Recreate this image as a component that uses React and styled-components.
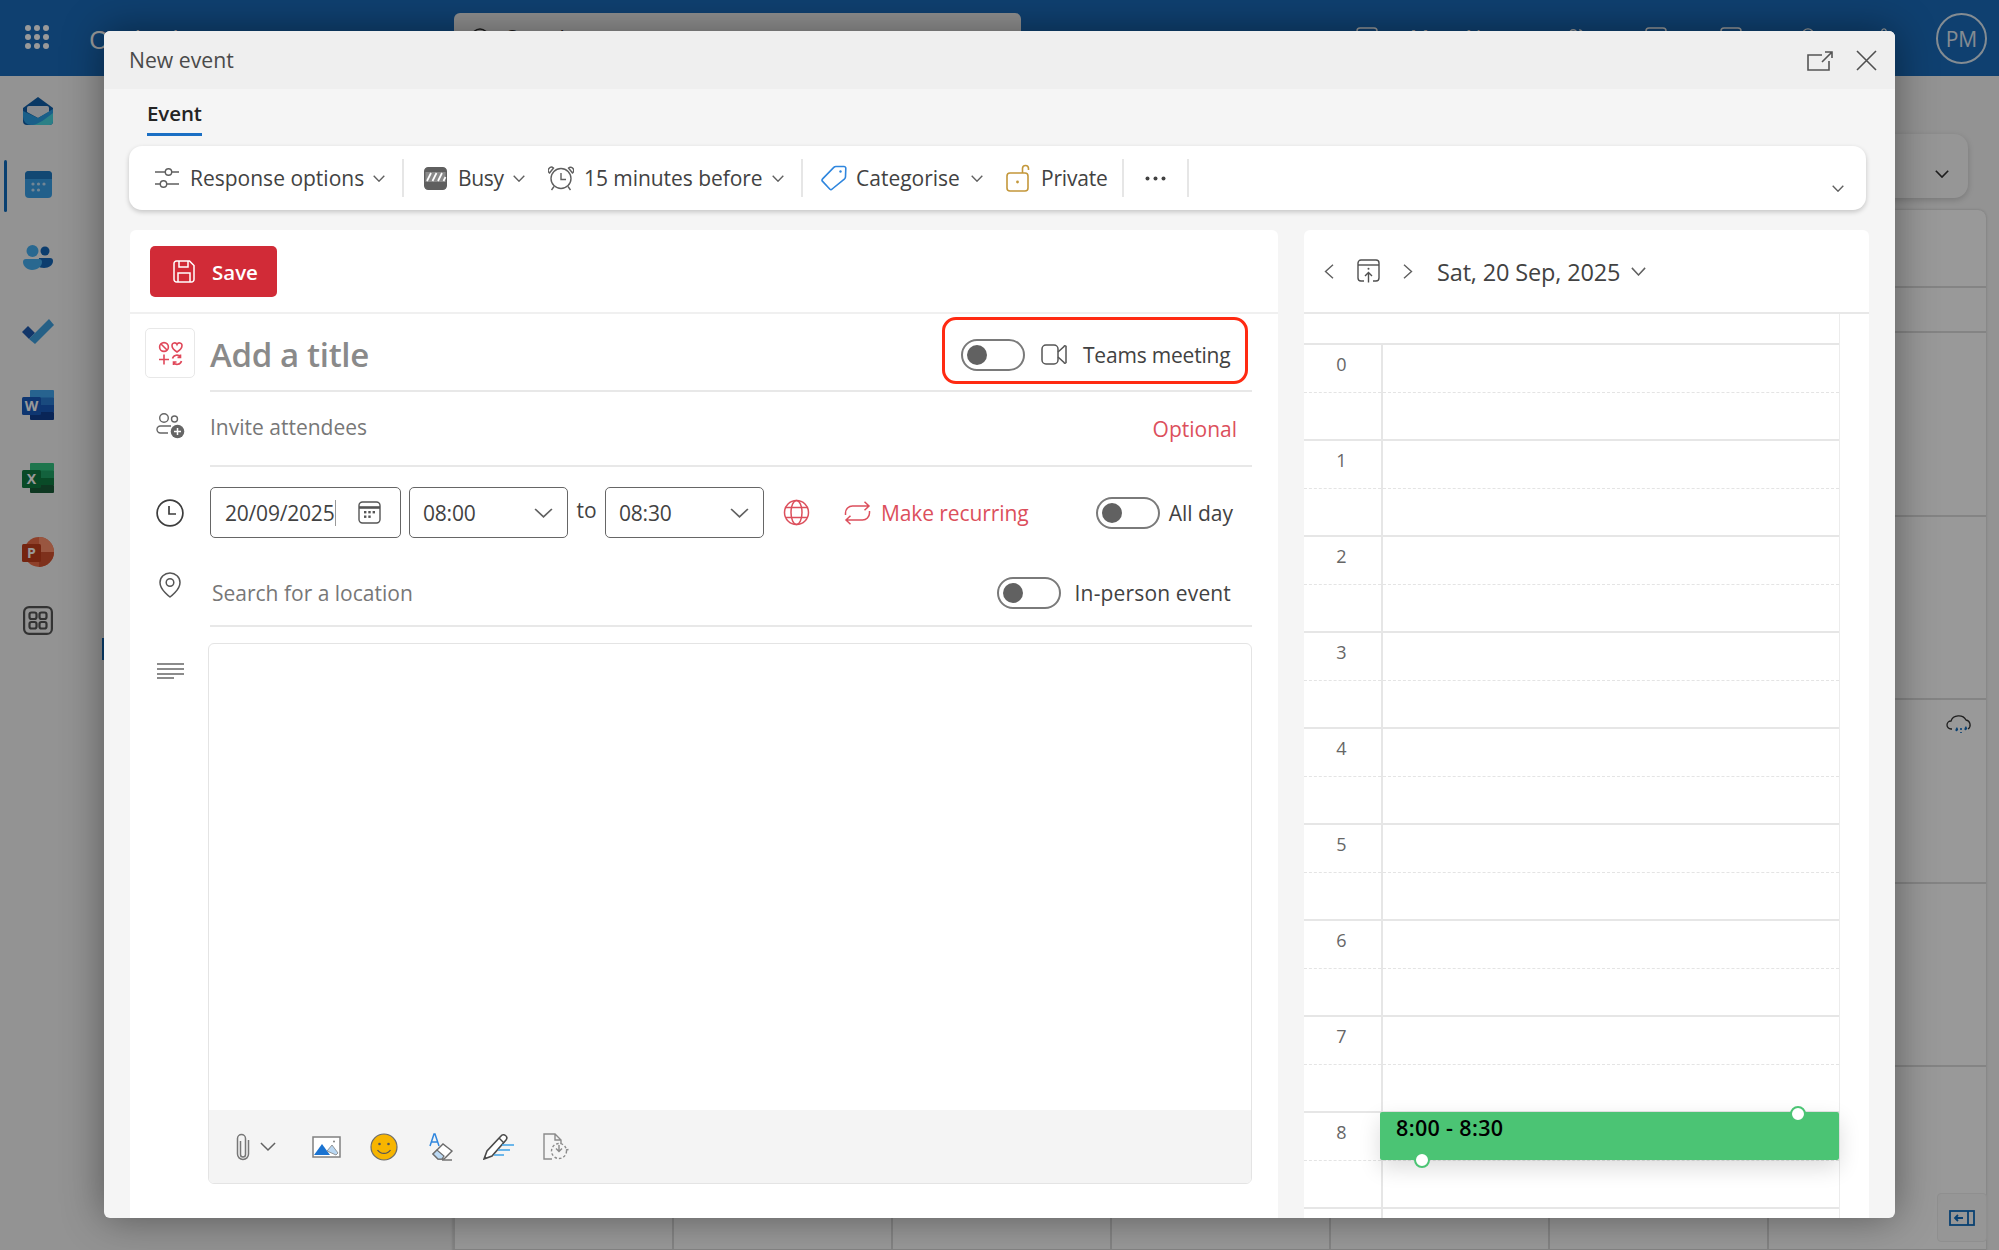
import React from "react";
import styled, { createGlobalStyle } from "styled-components";
import { Settings, Lightbulb, Users } from "lucide-react";

const Global = createGlobalStyle`
  html, body { margin: 0; padding: 0; width: 1999px; height: 1250px; overflow: hidden; background: #f5f5f5; }
  * { box-sizing: border-box; }
  body { font-family: "Open Sans", "Noto Sans", sans-serif; color: #424242; }
`;

const Page = styled.div`
  position: relative; width: 1999px; height: 1250px; overflow: hidden; background: #f5f5f5;
  display: flex; flex-direction: column;
`;
const Scrim = styled.div`position: absolute; inset: 0; background: rgba(0,0,0,.4); z-index: 1;`;

/* ---------- app behind the dialog ---------- */
const TopBar = styled.header`
  height: 76px; flex: none; background: #196cbb; display: flex; align-items: center; padding-left: 25px; color: #fff;
`;
const Waffle = styled.div`display: grid; grid-template-columns: repeat(3, 6px); gap: 3px; width: 24px; margin-top: -3px;
  i { width: 6px; height: 6px; border-radius: 50%; background: #fff; display: block; }`;
const Brand = styled.div`font-size: 26px; width: 365px; margin-left: 40px; margin-top: 2px;`;
const SearchBox = styled.div`
  width: 567px; height: 50px; background: #f0f0f0; border-radius: 6px; display: flex; align-items: center; gap: 15px; padding-left: 17px; color: #333; font-size: 21px;
`;
const TopTools = styled.div`display: flex; align-items: center; margin-left: 335px; width: 560px; font-size: 21px;`;
const TopTool = styled.span`display: flex; margin-left: ${p => p.$ml}px;`;
const MeetNow = styled.span`margin-left: 32px; width: 130px; white-space: nowrap;`;
const Avatar = styled.div`
  width: 51px; height: 51px; border-radius: 50%; border: 2px solid #fff; display: flex; align-items: center; justify-content: center; font-size: 21px; opacity: .85;
  position: absolute; right: 12px; top: 13px;
`;
const Main = styled.div`flex: 1; display: flex; min-height: 0;`;
const Sidebar = styled.nav`position: relative; width: 104px; flex: none; margin-top: -2px;`;
const NavItem = styled.div`height: ${p => p.$h || 73.5}px; display: flex; align-items: center; justify-content: center; padding-right: 28px;`;
const NavMark = styled.span`position: absolute; left: 4px; top: 86px; width: 3px; height: 52px; border-radius: 2px; background: #0f6cbd;`;
const NavTick = styled.span`position: absolute; right: 0; top: 564px; width: 2px; height: 22px; background: #0f6cbd;`;
const Canvas = styled.div`flex: 1; position: relative; padding: 0 13px 0 349px;`;
const FilterCard = styled.div`
  height: 64px; margin: 58px 18px 12px 0; background: #fafafa; border-radius: 14px; box-shadow: 0 2px 6px rgba(0,0,0,.18);
  display: flex; justify-content: flex-end; align-items: center; padding: 16px 19px 0 0;
`;
const WeekPanel = styled.div`background: #fff; border-radius: 8px 8px 0 0; box-shadow: 0 0 3px rgba(0,0,0,.2); height: 1100px;`;
const WeekHead = styled.div`height: 78px; border-bottom: 2px solid #ddd;`;
const WeekSub = styled.div`height: 45px; border-bottom: 2px solid #ddd;`;
const WeekGrid = styled.div`display: grid; grid-template-columns: repeat(7, 1fr); grid-auto-rows: 183.6px;`;
const DayCell = styled.div`border-left: 2px solid #ddd; border-bottom: 2px solid #ddd; display: flex; justify-content: flex-end; padding: 14px 13px 0 0;`;
const PaneToggle = styled.div`
  position: absolute; right: 12px; bottom: 8px; width: 50px; height: 49px; background: #fafafa; border: 1px solid #eee; border-radius: 4px;
  display: flex; align-items: center; justify-content: center;
`;

/* ---------- dialog ---------- */
const Dialog = styled.section`
  position: absolute; left: 104px; top: 31px; width: 1791px; height: 1187px; z-index: 2;
  background: #f5f5f5; border-radius: 6px; overflow: hidden;
  box-shadow: 0 0 42px rgba(0,0,0,.42); display: flex; flex-direction: column;
`;
const DialogHead = styled.div`
  height: 58px; flex: none; background: #efefef; display: flex; align-items: center; justify-content: space-between; padding: 0 18px 0 25px;
`;
const DialogTitle = styled.h1`margin: 0; font-weight: 400; font-size: 21.2px; color: #4a4a4a; margin-top: -2px;`;
const HeadActions = styled.div`display: flex; align-items: center; gap: 23px; margin-top: 1px;`;
const TabStrip = styled.div`height: 57px; flex: none; padding-left: 43px;`;
const Tab = styled.div`
  display: inline-block; height: 47px; padding-top: 9px; font-size: 20.5px; font-weight: 600; color: #242424; line-height: 30px; border-bottom: 3.5px solid #1a6fc4; letter-spacing: -.1px;
`;
const Toolbar = styled.div`
  height: 64px; flex: none; margin: 0 29px 0 25px; background: #fff; border-radius: 13px; box-shadow: 0 2px 5px rgba(0,0,0,.2);
  display: flex; align-items: center; padding-left: 25px; position: relative;
`;
const ToolGroup = styled.div`display: flex; align-items: center; margin-left: ${p => p.$ml || 0}px;`;
const ToolIcon = styled.span`display: flex; margin-right: ${p => p.$gap}px;`;
const ToolLabel = styled.span`width: ${p => p.$w}px; font-size: 21px; white-space: nowrap; color: #424242; letter-spacing: ${p => p.$ls || 0}px; margin-right: ${p => p.$mr || 0}px;`;
const ToolSep = styled.span`width: 2px; height: 38px; background: #e6e6e6; margin-left: ${p => p.$ml}px;`;
const ToolCollapse = styled.span`position: absolute; right: 22px; bottom: 18px; display: flex;`;

const Content = styled.div`flex: 1; min-height: 0; display: flex; gap: 26px; padding: 20px 26px 0 26px;`;
const FormPanel = styled.div`width: 1148px; background: #fff; border-radius: 6px 6px 0 0; display: flex; flex-direction: column; padding-right: 26px; flex: none;`;
const SaveBar = styled.div`height: 84px; flex: none; margin-right: -26px; border-bottom: 2px solid #f0f0f0; padding: 16px 0 0 20px;`;
const SaveButton = styled.button`
  width: 127px; height: 51px; border: 0; border-radius: 5px; background: #d12b37; color: #fff; display: flex; align-items: center; gap: 17px; padding: 0 0 0 23px;
  font: 600 20.5px "Open Sans", sans-serif;
`;
const Row = styled.div`height: ${p => p.$h}px; flex: none; display: flex;`;
const RowIcon = styled.div`width: 80px; flex: none; display: flex; align-items: center; justify-content: center; padding-bottom: ${p => p.$pb || 0}px;`;
const RowBody = styled.div`flex: 1; min-width: 0; display: flex; align-items: center; justify-content: space-between; ${p => p.$line && "border-bottom: 2px solid #e8e8e8;"} padding-top: ${p => p.$pt || 0}px;`;
const IconBox = styled.div`width: 50px; height: 50px; border: 1.5px solid #e8e8e8; border-radius: 5px; display: flex; align-items: center; justify-content: center; margin: 14px 15px 0 15px; flex: none;`;
const TitleRow = styled.div`height: 78px; flex: none; display: flex;`;
const TitleInput = styled.span`font-size: 33px; font-weight: 600; color: #8a8a8a; letter-spacing: -.35px; margin-top: 5px;`;
const CalloutBox = styled.div`
  width: 306px; height: 67px; border: 3px solid #ff2a12; border-radius: 14px; display: flex; align-items: center; padding: 8px 0 0 16px; margin: 0 4px 3px 0; flex: none;
`;
const Switch = styled.span`
  width: 64px; height: 32px; flex: none; border: 2px solid #7a7a7a; border-radius: 16px; display: flex; align-items: center; padding-left: 4px; background: #fff;
  &::before { content: ""; width: 20px; height: 20px; border-radius: 50%; background: #616161; }
`;
const SwitchLabel = styled.span`font-size: 21px; color: #424242; white-space: nowrap; margin-left: ${p => p.$ml}px; letter-spacing: ${p => p.$ls || 0}px;`;
const Placeholder = styled.span`font-size: 21px; color: #777; white-space: nowrap; margin-left: ${p => p.$ml || 0}px; margin-top: ${p => p.$mt || 0}px;`;
const Accent = styled.span`font-size: 21px; color: #dc4f5c; white-space: nowrap; margin: 0 ${p => p.$mr || 0}px 0 ${p => p.$ml || 0}px; letter-spacing: ${p => p.$ls || 0}px;`;
const Inline = styled.div`display: flex; align-items: center; margin-right: ${p => p.$mr || 0}px;`;
const Field = styled.div`
  width: ${p => p.$w}px; height: 51px; flex: none; border: 1.5px solid #666; border-radius: 5px; display: flex; align-items: center; justify-content: space-between; margin-left: ${p => p.$ml || 0}px; padding: 0 ${p => p.$pr}px 0 ${p => p.$pl}px; font-size: 21px; color: #424242; background: #fff;
`;
const Caret = styled.span`width: 1px; height: 26px; background: #999; margin-left: 1px;`;
const FieldText = styled.span`display: flex; align-items: center; letter-spacing: -.2px;`;
const ToWord = styled.span`font-size: 21px; width: 37px; text-align: center; margin-top: -6px; flex: none;`;
const BodyRow = styled.div`display: flex; margin-top: 16px; height: 541px; flex: none;`;
const BodyIcon = styled.div`width: 78px; flex: none; display: flex; justify-content: center; padding: 20px 0 0 3px;`;
const Editor = styled.div`flex: 1; border: 1.5px solid #e4e4e4; border-radius: 6px; overflow: hidden; display: flex; flex-direction: column; justify-content: flex-end;`;
const EditorBar = styled.div`height: 73px; background: #f4f4f4; display: flex; align-items: center; padding-left: 27px;`;
const BarIcon = styled.span`display: flex; margin-left: ${p => p.$ml}px;`;

const CalPanel = styled.div`flex: 1; min-width: 0; background: #fff; border-radius: 6px 6px 0 0; overflow: hidden; display: flex; flex-direction: column;`;
const CalHead = styled.div`height: 84px; flex: none; border-bottom: 2px solid #e8e8e8; display: flex; align-items: center; padding-left: 20px;`;
const CalBtn = styled.span`display: flex; margin-right: ${p => p.$mr}px;`;
const CalDate = styled.span`font-size: 23.5px; font-weight: 500; color: #424242; margin: 2px 11px 0 0; white-space: nowrap; letter-spacing: -.15px;`;
const CalGrid = styled.div`width: 536px; flex: 1; border-right: 1.5px solid #ececec;`;
const AllDayStrip = styled.div`height: 29px;`;
const Hour = styled.div`height: 96px; display: flex; border-top: 2px solid #e6e6e6; position: relative;`;
const HourLabel = styled.div`width: 77px; flex: none; position: relative; text-align: center; font-size: 18px; line-height: 24px; padding-top: 7px; color: #666; padding-right: 2px;
  &::after { content: ""; position: absolute; left: 0; right: 0; top: 47px; border-top: 1.5px dashed #e4e4e4; }`;
const HourBody = styled.div`flex: 1; border-left: 2px solid #e6e6e6; position: relative;
  &::after { content: ""; position: absolute; left: 0; right: 0; top: 47px; border-top: 1.5px dashed #e4e4e4; }`;
const EventBlock = styled.div`
  position: absolute; left: -3px; right: 0; top: -1px; height: 48px; background: #4bc474; border-radius: 2px; z-index: 1;
  box-shadow: 0 8px 22px rgba(0,0,0,.14); padding: 1px 0 0 16px; font-size: 21.5px; line-height: 30px; font-weight: 600; color: #000; letter-spacing: .35px;
`;
const Handle = styled.span`
  position: absolute; width: 16px; height: 16px; border-radius: 50%; background: #fff; border: 2.5px solid #4bc474;
  ${p => p.$top ? "right: 33px; top: -6px;" : "left: 34px; bottom: -8px;"}
`;

const Chev = ({ w = 12, h = 7, c = "#616161", sw = 1.4 }) => (
  <svg width={w} height={h} viewBox="0 0 12 7" preserveAspectRatio="none" fill="none"><path d="M.7.7 6 6.2 11.3.7" stroke={c} strokeWidth={sw} /></svg>
);

const Grey = "#5f5f5f";
const SlidersIc = () => (
  <svg width="26" height="22" viewBox="0 0 26 22" fill="none" stroke={Grey} strokeWidth="1.4"><path d="M1 5h10M18 5h7M1 17h5M13 17h12" /><circle cx="14.5" cy="5" r="3.2" /><circle cx="9.5" cy="17" r="3.2" /></svg>
);
const BusyIc = () => (
  <svg width="23" height="23" viewBox="0 0 23 23">
    <rect x=".7" y=".7" width="21.6" height="21.6" rx="3.5" fill="#8a8a8a" stroke="#5f5f5f" strokeWidth="1.4" />
    <path d="M1 5V4a3 3 0 0 1 3-3h15a3 3 0 0 1 3 3v1z" fill="#5f5f5f" />
    <path d="M1 15h21v4a3 3 0 0 1-3 3H4a3 3 0 0 1-3-3z" fill="#5f5f5f" />
    <path d="M3 14l4-8M8.5 14l4-8M14 14l4-8M19.5 14l2-4" stroke="#fff" strokeWidth="1.7" />
  </svg>
);
const AlarmIc = () => (
  <svg width="26" height="25" viewBox="0 0 26 25" fill="none" stroke={Grey} strokeWidth="1.4"><circle cx="13" cy="12.5" r="10" /><path d="M13 7v6.5h5M1.5 7 5.5 2a3 3 0 0 0-4 5zM24.5 7 20.5 2a3 3 0 0 1 4 5zM6 20.5l-2.500 3.500M20 20.500l2.500 3.500" /></svg>
);
const TagIc = () => (
  <svg width="26" height="26" viewBox="0 0 26 26" fill="none" stroke="#2f86de" strokeWidth="1.6"><path d="M15 1.5h8a1.8 1.8 0 0 1 1.8 1.8l-.3 8.5a3 3 0 0 1-.9 2L11.2 24a1.8 1.8 0 0 1-2.5 0L1.6 16.4a1.8 1.8 0 0 1 0-2.5L12.8 2.4a3 3 0 0 1 2.2-.9z" /><circle cx="19.5" cy="6.5" r="1.2" fill="#2f86de" stroke="none" /></svg>
);
const LockIc = () => (
  <svg width="24" height="28" viewBox="0 0 24 28" fill="none" stroke="#c3973a" strokeWidth="1.6"><rect x="1" y="9" width="21" height="18" rx="3" /><path d="M16.5 9V4.5a3 3 0 0 1 6 0V6" /><circle cx="11.5" cy="18" r="1.4" fill="#c3973a" stroke="none" /></svg>
);
const Dots = () => (
  <svg width="21" height="5" viewBox="0 0 21 5" fill="#424242"><circle cx="2.5" cy="2.5" r="2" /><circle cx="10.5" cy="2.5" r="2" /><circle cx="18.5" cy="2.5" r="2" /></svg>
);
const PopOut = () => (
  <svg width="26" height="20" viewBox="0 0 26 20" fill="none" stroke="#555" strokeWidth="1.6"><path d="M15 4H1v15h21V10" /><path d="M15 11 25 1M18 1h7v6" /></svg>
);
const CloseX = () => (
  <svg width="21" height="21" viewBox="0 0 21 21" fill="none" stroke="#505050" strokeWidth="1.6"><path d="m1 1 19 19M20 1 1 20" /></svg>
);
const SaveIc = () => (
  <svg width="22" height="23" viewBox="0 0 22 23" fill="none" stroke="#fff" strokeWidth="1.5"><path d="M1 3.5A2.5 2.5 0 0 1 3.5 1h13L21 5.5v14a2.5 2.5 0 0 1-2.5 2.5h-15A2.5 2.5 0 0 1 1 19.5z" /><path d="M6 1v6h9V1M5 22v-9h12v9" /></svg>
);
const CategoryIc = () => (
  <svg width="25" height="25" viewBox="0 0 25 25" fill="none" stroke="#e0485a" strokeWidth="1.6"><circle cx="6" cy="6" r="4.4" /><path d="m3 3 6 6" /><path d="M19 11s-5-3-5-6.4A2.6 2.6 0 0 1 19 3.5a2.6 2.6 0 0 1 5 1.1C24 8 19 11 19 11z" /><path d="M1 18.5h10M6 13.5v10" /><path d="M14.5 17.5a4.5 4.5 0 0 1 8-1.5M23.5 20a4.5 4.5 0 0 1-8 1.5M22.5 13.5V16.5H19.5M15.5 24v-3h3" /></svg>
);
const VideoIc = () => (
  <svg width="26" height="21" viewBox="0 0 26 21" fill="none" stroke="#555" strokeWidth="1.5"><rect x="1" y="1" width="16" height="19" rx="4" /><path d="M17 8l6-5.5a1 1 0 0 1 2 .8v14.4a1 1 0 0 1-2 .8L17 13" /></svg>
);
const AttendeeIc = () => (
  <svg width="29" height="26" viewBox="0 0 29 26" fill="none" stroke="#666" strokeWidth="1.4"><circle cx="8" cy="5" r="4.3" /><circle cx="18.5" cy="6" r="3" /><path d="M15 13H4.5a3.4 3.4 0 0 0 0 7H12" /><circle cx="21.5" cy="18.5" r="6.8" fill="#666" stroke="none" /><path d="M21.5 15v7M18 18.5h7" stroke="#fff" strokeWidth="1.5" /></svg>
);
const ClockIc = () => (
  <svg width="28" height="28" viewBox="0 0 28 28" fill="none" stroke="#3d3d3d" strokeWidth="1.7"><circle cx="14" cy="14" r="12.9" /><path d="M13 7v8h7" /></svg>
);
const CalSmall = () => (
  <svg width="23" height="23" viewBox="0 0 23 23" fill="none" stroke="#555" strokeWidth="1.4"><rect x="1" y="1" width="21" height="21" rx="3.5" /><path d="M1 6.5h21" strokeWidth="2.6" /><g fill="#555" stroke="none"><rect x="6" y="10" width="2.4" height="2.4" /><rect x="10.3" y="10" width="2.4" height="2.4" /><rect x="14.6" y="10" width="2.4" height="2.4" /><rect x="6" y="14.5" width="2.4" height="2.4" /><rect x="10.3" y="14.5" width="2.4" height="2.4" /></g></svg>
);
const GlobeIc = () => (
  <svg width="27" height="27" viewBox="0 0 27 27" fill="none" stroke="#dc4f5c" strokeWidth="1.5"><circle cx="13.5" cy="13.5" r="12" /><ellipse cx="13.5" cy="13.5" rx="5.5" ry="12" /><path d="M3 8.5h21M3 18.5h21" /></svg>
);
const RepeatIc = () => (
  <svg width="27" height="24" viewBox="0 0 27 24" fill="none" stroke="#dc4f5c" strokeWidth="1.5"><path d="M1.5 14V12A7 7 0 0 1 8.5 5H25M20.5.7 25 5l-4.5 4.3" /><path d="M25.5 10v2a7 7 0 0 1-7 7H2M6.5 14.7 2 19l4.5 4.3" /></svg>
);
const PinIc = () => (
  <svg width="24" height="26" viewBox="0 0 24 26" fill="none" stroke="#555" strokeWidth="1.5"><path d="M12 25S2 18 2 10.5a10 9.5 0 0 1 20 0C22 18 12 25 12 25z" /><circle cx="12" cy="10.5" r="3.8" /></svg>
);
const BodyLines = () => (
  <svg width="27" height="16" viewBox="0 0 27 16" stroke="#666" strokeWidth="1.5"><path d="M0 1h27M0 6h27M0 11h27M0 15h17" /></svg>
);
const ClipIc = () => (
  <svg width="14" height="28" viewBox="0 0 14 28" fill="none" stroke="#777" strokeWidth="1.5"><path d="M4.5 8v13.5a2.4 2.4 0 0 0 5 0V5.5a4 4 0 0 0-8 0V21a5.5 5.5 0 0 0 11 0V7" /></svg>
);
const ImageIc = () => (
  <svg width="29" height="22" viewBox="0 0 29 22"><rect x="1" y="1" width="27" height="20" fill="#fff" stroke="#808080" strokeWidth="1.5" /><path d="M2 19 10 8l8 11z" fill="#1a73d1" /><path d="m15 15 5-6 6 8-2 2z" fill="#b9d7f2" stroke="#808080" strokeWidth=".8" /><circle cx="22" cy="5.5" r="1" fill="#808080" /></svg>
);
const Smile = () => (
  <svg width="28" height="28" viewBox="0 0 28 28" fill="none"><circle cx="14" cy="14" r="13" fill="#f7b500" stroke="#6b6b6b" strokeWidth="1.2" /><circle cx="9.5" cy="11" r="1.3" fill="#555" /><circle cx="18.5" cy="11" r="1.3" fill="#555" /><path d="M7.5 17c3 4.5 10 4.5 13 0" stroke="#555" strokeWidth="1.3" /></svg>
);
const EraserIc = () => (
  <svg width="25" height="28" viewBox="0 0 25 28" fill="none"><path d="M1 13 5 1h1l4 12M2.5 9h6" stroke="#2f86de" strokeWidth="1.5" /><path d="m4 21 10-10 9 7-8 8h-6z" fill="#fff" stroke="#6b6b6b" strokeWidth="1.4" /><path d="m4 21 4-4 7 6-2 3H9z" fill="#bcd9f3" stroke="#6b6b6b" strokeWidth="1.2" /><path d="M13 27h10" stroke="#6b6b6b" strokeWidth="1.4" /></svg>
);
const PenIc = () => (
  <svg width="31" height="27" viewBox="0 0 31 27" fill="none"><path d="M1 26 4 18 18 3a3 3 0 0 1 5 4L9 23z" fill="#fff" stroke="#4a4a4a" strokeWidth="1.6" /><path d="m16 5 5 5" stroke="#4a4a4a" strokeWidth="1.4" /><path d="M1 26l3-1-2-2z" fill="#4a4a4a" /><path d="M19 12h12M15 17h12M11 22h10" stroke="#3ea1e6" strokeWidth="1.5" /></svg>
);
const DocTimerIc = () => (
  <svg width="26" height="27" viewBox="0 0 26 27" fill="none" stroke="#8a8a8a" strokeWidth="1.4"><path d="M9 26H1V1h11l6 6v4M12 1v6h6" /><circle cx="16" cy="18" r="7.5" strokeDasharray="2.6 2" /><path d="M16 12v6M13 15.5l3 3 3-3M23 17l2.5-.5" /></svg>
);
const ChevLeft = () => (
  <svg width="10" height="15" viewBox="0 0 10 15" fill="none" stroke="#5f5f5f" strokeWidth="1.4"><path d="M9 .7 1.5 7.5 9 14.3" /></svg>
);
const ChevRight = () => (
  <svg width="10" height="15" viewBox="0 0 10 15" fill="none" stroke="#5f5f5f" strokeWidth="1.4"><path d="M1 .7 8.5 7.5 1 14.3" /></svg>
);
const TodayIc = () => (
  <svg width="23" height="24" viewBox="0 0 23 24" fill="none" stroke="#505050" strokeWidth="1.4"><path d="M7 22H4a3 3 0 0 1-3-3V4a3 3 0 0 1 3-3h15a3 3 0 0 1 3 3v15a3 3 0 0 1-3 3h-3" /><path d="M1 6h21" /><path d="M11.5 23.5V14M8 17l3.5-3.5L15 17" /><circle cx="11.5" cy="9.7" r="1" fill="#505050" stroke="none" /></svg>
);

/* nav icons */
const MailNav = () => (
  <svg width="30" height="28" viewBox="0 0 30 28"><path d="M15 0 30 11v13a4 4 0 0 1-4 4H4a4 4 0 0 1-4-4V11z" fill="#0f5ea8" /><path d="M6 9h18a2 2 0 0 1 2 2v4l-11 6-11-6v-4a2 2 0 0 1 2-2z" fill="#e4e8ee" /><path d="M0 14 15 21l15-9v12a4 4 0 0 1-4 4H8A8 8 0 0 1 0 20z" fill="#2a9ee4" /><path d="M10 28c6-1 12-6 20-12v8a4 4 0 0 1-4 4z" fill="#48d6e0" /></svg>
);
const CalNav = () => (
  <svg width="27" height="27" viewBox="0 0 27 27"><rect width="27" height="27" rx="4" fill="#3aa0e8" /><path d="M0 8V4a4 4 0 0 1 4-4h19a4 4 0 0 1 4 4v4z" fill="#1f78c0" /><g fill="#bfe0f8"><circle cx="8" cy="13" r="1.6" /><circle cx="13.5" cy="13" r="1.6" /><circle cx="19" cy="13" r="1.6" /><circle cx="8" cy="19" r="1.6" /><circle cx="13.5" cy="19" r="1.6" /></g></svg>
);
const PeopleNav = () => (
  <svg width="30" height="25" viewBox="0 0 30 25"><circle cx="22" cy="6" r="4.5" fill="#1466b8" /><path d="M16 13h11a3 3 0 0 1 3 3c0 4-4 7-9 7-3 0-5-1-6-2z" fill="#1466b8" /><circle cx="9.5" cy="6" r="6" fill="#45aef0" /><path d="M3 14h13a3 3 0 0 1 3 3c0 4-4 8-10 8-5 0-9-4-9-8a3 3 0 0 1 3-3z" fill="#45aef0" /></svg>
);
const CheckNav = () => (
  <svg width="32" height="25" viewBox="0 0 32 25"><path d="M0 13 6 7l7 7-6 6z" fill="#1e5ab0" /><path d="m7 20 6 5L32 6l-5-6L13 14z" fill="#3fa0e0" /></svg>
);
const OfficeNav = ({ a, b, c, d, fg, letter, round }) => (
  <svg width="32" height="30" viewBox="0 0 32 30" fontFamily="Open Sans, sans-serif">
    {round ? (<><circle cx="17" cy="15" r="15" fill={b} /><path d="M17 0a15 15 0 0 1 15 15H17z" fill={a} /><path d="M17 15h15a15 15 0 0 1-15 15z" fill={c} /></>) : (<>
      <rect x="8" y="0" width="24" height="8" rx="1" fill={a} /><rect x="8" y="7.5" width="24" height="7.5" fill={b} /><rect x="8" y="15" width="24" height="7.5" fill={c} /><rect x="8" y="22" width="24" height="8" rx="1" fill={d} /></>)}
    <rect x="0" y="7" width="19" height="18" rx="1.5" fill={fg} />
    <text x="9.5" y="21" textAnchor="middle" fontSize="14" fontWeight="700" fill="#fff">{letter}</text>
  </svg>
);
const AppsNav = () => (
  <svg width="30" height="29" viewBox="0 0 30 29" fill="none" stroke="#555" strokeWidth="2.2"><rect x="1.1" y="1.1" width="27.8" height="26.8" rx="5" /><rect x="6.5" y="6.5" width="7" height="6.5" rx="2" /><rect x="16.5" y="6.5" width="7" height="6.5" rx="2" /><rect x="6.5" y="16" width="7" height="6.5" rx="2" /><rect x="16.5" y="16" width="7" height="6.5" rx="2" /></svg>
);
const TopIc = () => (
  <svg width="22" height="22" viewBox="0 0 22 22" fill="none" stroke="#fff" strokeWidth="1.5"><rect x="1" y="1" width="20" height="20" rx="3" /></svg>
);
const CloudIc = () => (
  <svg width="27" height="21" viewBox="0 0 27 21" fill="none"><path d="M6 15H5a4 4 0 0 1 0-8 8 7 0 0 1 15-1 5 5 0 0 1 2 9" stroke="#333" strokeWidth="1.3" /><path d="M11 13c1 2 2 3 0 4s-2-2 0-4zM20 12c1 2 2 3 0 4s-2-2 0-4z" fill="#0f6cbd" /><path d="M15 14v2M15 18v1" stroke="#0f6cbd" strokeWidth="1.6" /></svg>
);
const PaneIc = () => (
  <svg width="26" height="16" viewBox="0 0 26 16" fill="none" stroke="#0f6cbd" strokeWidth="1.8"><rect x="1" y="1" width="24" height="14" /><path d="M19 1v14M14 8H6M9 5 6 8l3 3" /></svg>
);

const hours = [0, 1, 2, 3, 4, 5, 6, 7, 8, 9];

export default function App() {
  return (
    <Page>
      <Global />
      <TopBar>
        <Waffle>{Array.from({ length: 9 }).map((_, i) => <i key={i} />)}</Waffle>
        <Brand>Outlook</Brand>
        <SearchBox>
          <svg width="20" height="20" viewBox="0 0 20 20" fill="none" stroke="#333" strokeWidth="1.5"><circle cx="9" cy="9" r="8" /><path d="m15 15 4 4" /></svg>
          Search
        </SearchBox>
        <TopTools>
          <TopIc />
          <MeetNow>Meet Now</MeetNow>
          <TopTool $ml={25}><Users size={22} strokeWidth={1.5} /></TopTool>
          <TopTool $ml={58}><TopIc /></TopTool>
          <TopTool $ml={53}><TopIc /></TopTool>
          <TopTool $ml={55}><Lightbulb size={22} strokeWidth={1.5} /></TopTool>
          <TopTool $ml={54}><Settings size={22} strokeWidth={1.5} /></TopTool>
        </TopTools>
        <Avatar>PM</Avatar>
      </TopBar>
      <Main>
        <Sidebar>
          <NavMark />
          <NavTick />
          <NavItem><MailNav /></NavItem>
          <NavItem><CalNav /></NavItem>
          <NavItem><PeopleNav /></NavItem>
          <NavItem><CheckNav /></NavItem>
          <NavItem><OfficeNav a="#41a5ee" b="#2b7cd3" c="#185abd" d="#103f91" fg="#185abd" letter="W" /></NavItem>
          <NavItem><OfficeNav a="#33c481" b="#21a366" c="#107c41" d="#185c37" fg="#107c41" letter="X" /></NavItem>
          <NavItem><OfficeNav a="#ff8f6b" b="#ed6c47" c="#d35230" fg="#c43e1c" letter="P" round /></NavItem>
          <NavItem $h={64}><AppsNav /></NavItem>
        </Sidebar>
        <Canvas>
          <FilterCard><Chev w={14} h={8} c="#333" /></FilterCard>
          <WeekPanel>
            <WeekHead />
            <WeekSub />
            <WeekGrid>
              {Array.from({ length: 35 }).map((_, i) => (
                <DayCell key={i}>{i === 20 && <CloudIc />}</DayCell>
              ))}
            </WeekGrid>
          </WeekPanel>
          <PaneToggle><PaneIc /></PaneToggle>
        </Canvas>
      </Main>
      <Scrim />
      <Dialog>
        <DialogHead>
          <DialogTitle>New event</DialogTitle>
          <HeadActions><PopOut /><CloseX /></HeadActions>
        </DialogHead>
        <TabStrip><Tab>Event</Tab></TabStrip>
        <Toolbar>
          <ToolGroup>
            <ToolIcon $gap={10}><SlidersIc /></ToolIcon>
            <ToolLabel $w={173} $mr={10}>Response options</ToolLabel>
            <Chev />
          </ToolGroup>
          <ToolSep $ml={17} />
          <ToolGroup $ml={20}>
            <ToolIcon $gap={11}><BusyIc /></ToolIcon>
            <ToolLabel $w={45} $mr={10} $ls={-.3}>Busy</ToolLabel>
            <Chev />
          </ToolGroup>
          <ToolGroup $ml={23}>
            <ToolIcon $gap={10}><AlarmIc /></ToolIcon>
            <ToolLabel $w={178} $mr={10} $ls={-.05}>15 minutes before</ToolLabel>
            <Chev />
          </ToolGroup>
          <ToolSep $ml={17} />
          <ToolGroup $ml={18}>
            <ToolIcon $gap={9}><TagIc /></ToolIcon>
            <ToolLabel $w={104} $mr={11}>Categorise</ToolLabel>
            <Chev />
          </ToolGroup>
          <ToolGroup $ml={23}>
            <ToolIcon $gap={11}><LockIc /></ToolIcon>
            <ToolLabel $w={64} $ls={-.2}>Private</ToolLabel>
          </ToolGroup>
          <ToolSep $ml={17} />
          <ToolGroup $ml={21}><Dots /></ToolGroup>
          <ToolSep $ml={21} />
          <ToolCollapse><Chev /></ToolCollapse>
        </Toolbar>
        <Content>
          <FormPanel>
            <SaveBar>
              <SaveButton><SaveIc />Save</SaveButton>
            </SaveBar>
            <TitleRow>
              <IconBox><CategoryIc /></IconBox>
              <RowBody $line>
                <TitleInput>Add a title</TitleInput>
                <CalloutBox>
                  <Switch />
                  <BarIcon $ml={16}><VideoIc /></BarIcon>
                  <SwitchLabel $ml={16} $ls={-.2}>Teams meeting</SwitchLabel>
                </CalloutBox>
              </RowBody>
            </TitleRow>
            <Row $h={75}>
              <RowIcon $pb={8}><AttendeeIc /></RowIcon>
              <RowBody $line>
                <Placeholder $mt={-4}>Invite attendees</Placeholder>
                <Accent $mr={15}>Optional</Accent>
              </RowBody>
            </Row>
            <Row $h={91}>
              <RowIcon><ClockIc /></RowIcon>
              <RowBody>
                <Inline>
                  <Field $w={191} $pl={14} $pr={19}>
                    <FieldText>20/09/2025<Caret /></FieldText>
                    <CalSmall />
                  </Field>
                  <Field $w={159} $pl={13} $pr={14} $ml={8}>
                    <FieldText>08:00</FieldText>
                    <Chev w={19} h={10} sw={1.1} />
                  </Field>
                  <ToWord>to</ToWord>
                  <Field $w={159} $pl={13} $pr={14}>
                    <FieldText>08:30</FieldText>
                    <Chev w={19} h={10} sw={1.1} />
                  </Field>
                  <BarIcon $ml={19}><GlobeIc /></BarIcon>
                  <BarIcon $ml={34}><RepeatIc /></BarIcon>
                  <Accent $ml={10} $ls={-.1}>Make recurring</Accent>
                </Inline>
                <Inline $mr={19}>
                  <Switch />
                  <SwitchLabel $ml={9}>All day</SwitchLabel>
                </Inline>
              </RowBody>
            </Row>
            <Row $h={69}>
              <RowIcon $pb={16}><PinIc /></RowIcon>
              <RowBody $line $pt={2}>
                <Placeholder $ml={2}>Search for a location</Placeholder>
                <Inline $mr={21}>
                  <Switch />
                  <SwitchLabel $ml={14} $ls={.15}>In-person event</SwitchLabel>
                </Inline>
              </RowBody>
            </Row>
            <BodyRow>
              <BodyIcon><BodyLines /></BodyIcon>
              <Editor>
                <EditorBar>
                  <ClipIc />
                  <BarIcon $ml={10}><Chev w={16} h={9} sw={1.1} /></BarIcon>
                  <BarIcon $ml={36}><ImageIc /></BarIcon>
                  <BarIcon $ml={29}><Smile /></BarIcon>
                  <BarIcon $ml={31}><EraserIc /></BarIcon>
                  <BarIcon $ml={29}><PenIc /></BarIcon>
                  <BarIcon $ml={29}><DocTimerIc /></BarIcon>
                </EditorBar>
              </Editor>
            </BodyRow>
          </FormPanel>
          <CalPanel>
            <CalHead>
              <CalBtn $mr={23}><ChevLeft /></CalBtn>
              <CalBtn $mr={23}><TodayIc /></CalBtn>
              <CalBtn $mr={24}><ChevRight /></CalBtn>
              <CalDate>Sat, 20 Sep, 2025</CalDate>
              <Chev w={15} h={9} sw={1.2} />
            </CalHead>
            <CalGrid>
              <AllDayStrip />
              {hours.map(h => (
                <Hour key={h}>
                  <HourLabel>{h < 9 ? h : ""}</HourLabel>
                  <HourBody>
                    {h === 8 && (
                      <EventBlock>
                        8:00 - 8:30
                        <Handle $top />
                        <Handle />
                      </EventBlock>
                    )}
                  </HourBody>
                </Hour>
              ))}
            </CalGrid>
          </CalPanel>
        </Content>
      </Dialog>
    </Page>
  );
}
